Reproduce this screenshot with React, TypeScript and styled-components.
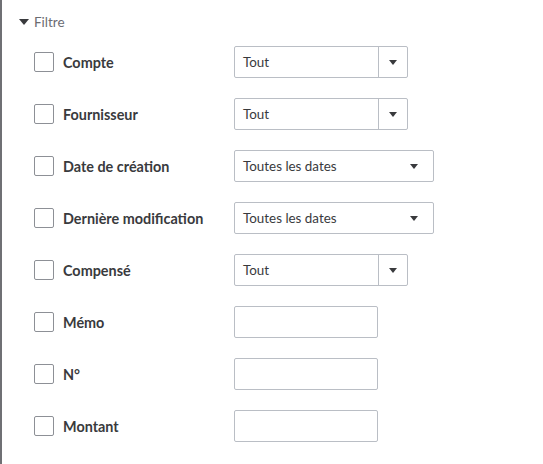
import styled, { createGlobalStyle } from "styled-components";

const GlobalStyle = createGlobalStyle`
  html, body {
    margin: 0;
    padding: 0;
    background: #ffffff;
  }
  body {
    font-family: Lato, "Noto Sans", "Liberation Sans", sans-serif;
    color: #393a3d;
  }
`;

const Page = styled.div`
  display: flex;
  width: 543px;
  height: 464px;
  overflow: hidden;
`;

const Backdrop = styled.div`
  width: 2px;
  flex-shrink: 0;
  background: #6f7074;
`;

const Panel = styled.div`
  flex: 1;
  background: #ffffff;
  padding: 13px 0 0 17px;
`;

const Header = styled.div`
  display: flex;
  align-items: center;
  gap: 5px;
  height: 18px;
  font-size: 13.5px;
  color: #6b6c72;
`;

const Caret = styled.span`
  width: 0;
  height: 0;
  border-left: 5px solid transparent;
  border-right: 5px solid transparent;
  border-top: 6px solid #393a3d;
`;

const Rows = styled.div`
  display: flex;
  flex-direction: column;
  gap: 20px;
  margin-top: 15px;
  padding-left: 15px;
`;

const Row = styled.div`
  display: flex;
  align-items: center;
  height: 32px;
`;

const Check = styled.span`
  width: 18px;
  height: 18px;
  border: 1px solid #8d9096;
  border-radius: 2px;
  flex-shrink: 0;
`;

const Label = styled.span`
  width: 171px;
  padding-left: 9px;
  font-size: 14.4px;
  font-weight: 700;
  color: #393a3d;
`;

const Box = styled.div<{ $w: number }>`
  box-sizing: border-box;
  display: flex;
  align-items: stretch;
  width: ${(p) => p.$w}px;
  height: 32px;
  border: 1px solid #babec5;
  border-radius: 2px;
  font-size: 13.4px;
  color: #393a3d;
`;

const Value = styled.span`
  flex: 1;
  display: flex;
  align-items: center;
  padding-left: 8px;
`;

const ArrowCell = styled.span<{ $split?: boolean }>`
  width: 28px;
  display: flex;
  align-items: center;
  justify-content: center;
  border-left: ${(p) => (p.$split ? "1px solid #babec5" : "none")};
  margin-right: ${(p) => (p.$split ? "0" : "5px")};
`;

const SmallCaret = styled.span`
  width: 0;
  height: 0;
  border-left: 4px solid transparent;
  border-right: 4px solid transparent;
  border-top: 5px solid #393a3d;
`;

type Field =
  | { kind: "select"; value: string }
  | { kind: "date"; value: string }
  | { kind: "text" };

const rows: { label: string; field: Field }[] = [
  { label: "Compte", field: { kind: "select", value: "Tout" } },
  { label: "Fournisseur", field: { kind: "select", value: "Tout" } },
  { label: "Date de création", field: { kind: "date", value: "Toutes les dates" } },
  { label: "Dernière modification", field: { kind: "date", value: "Toutes les dates" } },
  { label: "Compensé", field: { kind: "select", value: "Tout" } },
  { label: "Mémo", field: { kind: "text" } },
  { label: "N°", field: { kind: "text" } },
  { label: "Montant", field: { kind: "text" } },
];

const renderField = (f: Field) => {
  if (f.kind === "text") return <Box $w={144} />;
  if (f.kind === "date")
    return (
      <Box $w={200}>
        <Value>{f.value}</Value>
        <ArrowCell>
          <SmallCaret />
        </ArrowCell>
      </Box>
    );
  return (
    <Box $w={174}>
      <Value>{f.value}</Value>
      <ArrowCell $split>
        <SmallCaret />
      </ArrowCell>
    </Box>
  );
};

const App = () => {
  return (
    <Page>
      <GlobalStyle />
      <Backdrop />
      <Panel>
        <Header>
          <Caret />
          Filtre
        </Header>
        <Rows>
          {rows.map((r) => (
            <Row key={r.label}>
              <Check />
              <Label>{r.label}</Label>
              {renderField(r.field)}
            </Row>
          ))}
        </Rows>
      </Panel>
    </Page>
  );
};

export default App;
